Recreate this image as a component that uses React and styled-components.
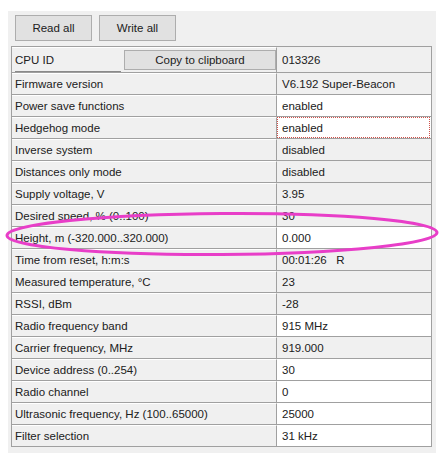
import React from "react";
import styled, { createGlobalStyle } from "styled-components";

const GlobalStyle = createGlobalStyle`
  html, body {
    margin: 0;
    padding: 0;
    background: #ffffff;
  }
  body {
    font-family: "Liberation Sans", Arial, sans-serif;
    font-size: 11.5px;
    color: #202020;
  }
`;

const Page = styled.div`
  position: relative;
  width: 443px;
  height: 453px;
  overflow: hidden;
  padding: 11px 0 0 8px;
  box-sizing: border-box;
`;

const Panel = styled.div`
  width: 428px;
  height: 100%;
  background: #f0f0f0;
  padding-top: 4px;
  box-sizing: border-box;
`;

const Toolbar = styled.div`
  display: flex;
  gap: 7px;
  padding-left: 7px;
`;

const WinButton = styled.button`
  font-family: "Liberation Sans", Arial, sans-serif;
  font-size: 11.5px;
  color: #202020;
  background: #e1e1e1;
  border: 1px solid #adadad;
  height: ${(p) => p.$h || 26}px;
  width: ${(p) => p.$w || 77}px;
  padding: 0;
  margin: 0;
  display: flex;
  align-items: center;
  justify-content: center;
`;

const Grid = styled.div`
  margin: 5px 0 0 3px;
  width: 421px;
  border-top: 1px solid #a0a0a0;
  border-left: 1px solid #a0a0a0;
  border-right: 1px solid #a0a0a0;
  box-sizing: border-box;
`;

const Row = styled.div`
  display: grid;
  grid-template-columns: 265px 1fr;
  height: ${(p) => (p.$first ? 26 : 22)}px;
  box-sizing: border-box;
`;

const Label = styled.div`
  display: flex;
  align-items: center;
  gap: 3px;
  padding-left: 3px;
  background: #f0f0f0;
  border-right: 1px solid #a0a0a0;
  border-bottom: 1px solid #a0a0a0;
  border-top: 1px solid #ffffff;
  white-space: nowrap;
  box-sizing: border-box;
`;

const LabelText = styled.span`
  flex: ${(p) => (p.$fixed ? "0 0 106px" : "1")};
  align-self: stretch;
  display: flex;
  align-items: center;
  ${(p) => (p.$fixed ? "border-bottom: 1px solid #8a8a8a;" : "")}
`;

const Value = styled.div`
  position: relative;
  display: flex;
  align-items: center;
  padding-left: 5px;
  background: ${(p) => (p.$edit ? "#ffffff" : "#f0f0f0")};
  border-bottom: 1px solid #a0a0a0;
  white-space: pre;
  box-sizing: border-box;
  ${(p) =>
    p.$focus
      ? `&::after {
          content: "";
          position: absolute;
          inset: 0 1px 0 0;
          border: 1px dotted #d0504a;
        }`
      : ""}
`;

const Overlay = styled.svg`
  position: absolute;
  left: 0;
  top: 0;
  pointer-events: none;
`;

const rows = [
  { label: "Firmware version", value: "V6.192 Super-Beacon" },
  { label: "Power save functions", value: "enabled", edit: true },
  { label: "Hedgehog mode", value: "enabled", edit: true, focus: true },
  { label: "Inverse system", value: "disabled" },
  { label: "Distances only mode", value: "disabled" },
  { label: "Supply voltage, V", value: "3.95" },
  { label: "Desired speed, % (0..100)", value: "30" },
  { label: "Height, m (-320.000..320.000)", value: "0.000", edit: true },
  { label: "Time from reset, h:m:s", value: "00:01:26   R" },
  { label: "Measured temperature, °C", value: "23" },
  { label: "RSSI, dBm", value: "-28" },
  { label: "Radio frequency band", value: "915 MHz", edit: true },
  { label: "Carrier frequency, MHz", value: "919.000" },
  { label: "Device address (0..254)", value: "30", edit: true },
  { label: "Radio channel", value: "0", edit: true },
  { label: "Ultrasonic frequency, Hz (100..65000)", value: "25000", edit: true },
  { label: "Filter selection", value: "31 kHz", edit: true },
];

export default function App() {
  return (
    <>
      <GlobalStyle />
      <Page>
        <Panel>
          <Toolbar>
            <WinButton>Read all</WinButton>
            <WinButton>Write all</WinButton>
          </Toolbar>
          <Grid>
            <Row $first>
              <Label>
                <LabelText $fixed>CPU ID</LabelText>
                <WinButton $w={152} $h={20}>
                  Copy to clipboard
                </WinButton>
              </Label>
              <Value>013326</Value>
            </Row>
            {rows.map((r) => (
              <Row key={r.label}>
                <Label>
                  <LabelText>{r.label}</LabelText>
                </Label>
                <Value $edit={r.edit} $focus={r.focus}>
                  {r.value}
                </Value>
              </Row>
            ))}
          </Grid>
        </Panel>
        <Overlay width="443" height="453" viewBox="0 0 443 453">
          <ellipse
            cx="222"
            cy="234"
            rx="215"
            ry="20.5"
            fill="none"
            stroke="#e83ec8"
            strokeWidth="3"
            transform="rotate(-0.4 222 234)"
          />
        </Overlay>
      </Page>
    </>
  );
}
